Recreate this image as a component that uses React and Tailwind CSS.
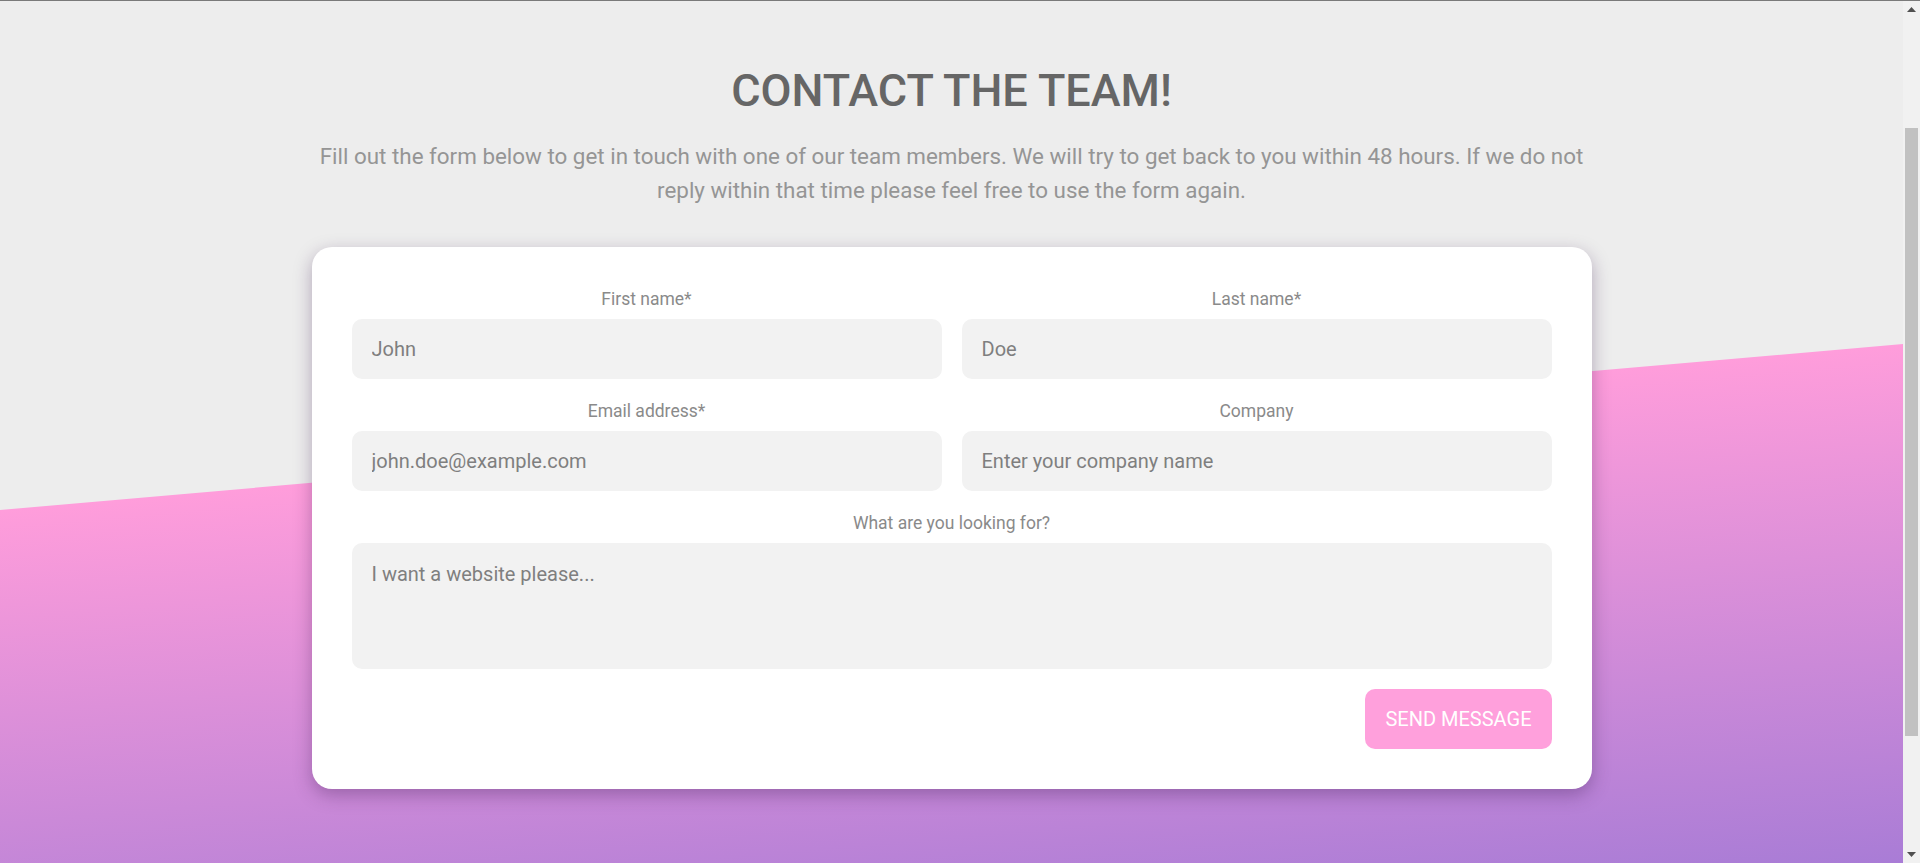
import React from "react";

const Field = ({ label, placeholder }) => (
  <div className="flex flex-col">
    <label className="mb-2 text-center text-[17.5px] leading-6 text-[#8a8a8a]">
      {label}
    </label>
    <input
      type="text"
      placeholder={placeholder}
      className="h-[60px] w-full rounded-[10px] bg-[#f2f2f2] px-5 text-[20px] text-[#7a7a7a] outline-none placeholder:text-[#7f7f7f]"
    />
  </div>
);

const Scrollbar = () => (
  <div className="flex h-full w-[17px] shrink-0 flex-col bg-[#f1f1f1]">
    <div className="flex h-[17px] items-center justify-center">
      <svg width="9" height="5" viewBox="0 0 9 5">
        <polygon points="4.5,0 9,5 0,5" fill="#505050" />
      </svg>
    </div>
    <div className="mx-[2px] mt-[110px] h-[608px] bg-[#c1c1c1]" />
    <div className="flex-1" />
    <div className="flex h-[17px] items-center justify-center">
      <svg width="9" height="5" viewBox="0 0 9 5">
        <polygon points="0,0 9,0 4.5,5" fill="#505050" />
      </svg>
    </div>
  </div>
);

const App = () => {
  return (
    <div className="flex h-screen overflow-hidden border-t border-[#7a7a7a] font-['Roboto',sans-serif]">
      <main className="relative flex-1 overflow-hidden bg-[#ededed]">
        <div className="pointer-events-none absolute inset-x-0 top-[343px] bottom-0 bg-[linear-gradient(175deg,#ff9ddb_165px,#a97cd6_100%)] [clip-path:polygon(0_166px,100%_0,100%_100%,0_100%)]" />

        <div className="relative mx-auto w-[1280px] pt-[63px]">
          <h1 className="text-center text-[45px] font-medium leading-[54px] text-[#666666]">
            CONTACT THE TEAM!
          </h1>
          <p className="mt-[21px] text-center text-[22.4px] leading-[34px] text-[#959595]">
            Fill out the form below to get in touch with one of our team
            members. We will try to get back to you within 48 hours. If we do
            not reply within that time please feel free to use the form again.
          </p>

          <form className="mt-[40px] rounded-[20px] bg-white p-10 shadow-[0_6px_18px_rgba(60,30,80,0.35)]">
            <div className="grid grid-cols-2 gap-5">
              <Field label="First name*" placeholder="John" />
              <Field label="Last name*" placeholder="Doe" />
              <Field label="Email address*" placeholder="john.doe@example.com" />
              <Field label="Company" placeholder="Enter your company name" />
            </div>

            <div className="mt-5 flex flex-col">
              <label className="mb-2 text-center text-[17.5px] leading-6 text-[#8a8a8a]">
                What are you looking for?
              </label>
              <textarea
                placeholder="I want a website please..."
                className="h-[126px] w-full resize-none rounded-[10px] bg-[#f2f2f2] px-5 py-4 text-[20px] leading-normal text-[#7a7a7a] outline-none placeholder:text-[#7f7f7f]"
              />
            </div>

            <div className="mt-5 flex justify-end">
              <button
                type="button"
                className="h-[60px] rounded-[10px] bg-[#ffa0dc] px-5 text-[20px] uppercase text-white"
              >
                Send message
              </button>
            </div>
          </form>
        </div>
      </main>
      <Scrollbar />
    </div>
  );
};

export default App;
